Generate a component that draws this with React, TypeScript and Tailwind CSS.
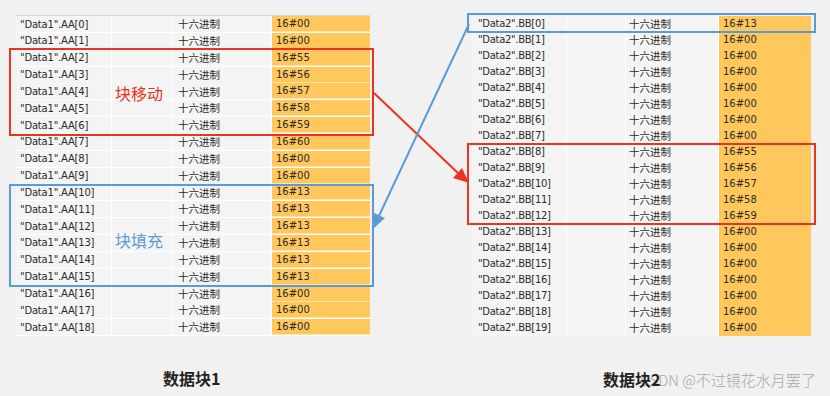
import React from 'react';

/** 一行数据 */
interface Row {
  name: string;
  value: string;
}

const LEFT_ROWS: Row[] = [
  '00', '00', '55', '56', '57', '58', '59', '60', '00', '00',
  '13', '13', '13', '13', '13', '13', '00', '00', '00',
].map((v, i) => ({ name: `"Data1".AA[${i}]`, value: `16#${v}` }));

const RIGHT_ROWS: Row[] = [
  '13', '00', '00', '00', '00', '00', '00', '00', '55', '56',
  '57', '58', '59', '00', '00', '00', '00', '00', '00', '00',
].map((v, i) => ({ name: `"Data2".BB[${i}]`, value: `16#${v}` }));

const latin = { fontFamily: '"DejaVu Sans", "Noto Sans CJK SC", sans-serif' };
const cjk = { fontFamily: '"Noto Sans CJK SC", sans-serif' };

function LeftTable() {
  return (
    <div className="w-[354px] border-t border-[#d9d9d9]">
      {LEFT_ROWS.map((r) => (
        <div
          key={r.name}
          className="grid h-[16.85px] grid-cols-[96px_61px_99px_98px] border-b border-white text-[#2b2b2b]"
        >
          <div className="flex items-center border-r border-white bg-[#f4f4f4] pl-[4px] text-[10px] tracking-[-0.2px]" style={latin}>
            {r.name}
          </div>
          <div className="border-r border-white bg-[#f4f4f4]" />
          <div className="flex items-center border-r border-white bg-[#f4f4f4] pl-[5px] text-[10.5px]" style={cjk}>
            十六进制
          </div>
          <div className="flex items-center border-b border-[#ffe2a6] bg-[#ffc75c] pl-[4px] text-[10px]" style={latin}>
            {r.value}
          </div>
        </div>
      ))}
    </div>
  );
}

function RightTable() {
  return (
    <div className="w-[339px]">
      {RIGHT_ROWS.map((r) => (
        <div
          key={r.name}
          className="grid h-[16px] grid-cols-[95px_59px_93px_92px] border-b border-white text-[#2b2b2b]"
        >
          <div className="flex items-center border-r border-white bg-[#f4f4f4] pl-[6px] text-[10px] tracking-[-0.3px]" style={latin}>
            {r.name}
          </div>
          <div className="border-r border-white bg-[#f4f4f4]" />
          <div className="flex items-center border-r border-white bg-[#f4f4f4] pl-[3px] text-[10.5px]" style={cjk}>
            十六进制
          </div>
          <div className="flex items-center bg-[#ffc75c] pl-[4px] text-[10px]" style={latin}>
            {r.value}
          </div>
        </div>
      ))}
    </div>
  );
}

export default function App() {
  return (
    <div className="relative flex h-[396px] w-[830px] overflow-hidden bg-[#f1f1f1]">
      {/* 数据块1 */}
      <div className="ml-[16px] mt-[15px] flex flex-col">
        <LeftTable />
        <div className="mt-[30px] pl-[147px] text-[16px] font-bold text-[#222]" style={cjk}>
          数据块1
        </div>
      </div>

      {/* 数据块2 */}
      <div className="ml-[102px] mt-[16px] flex flex-col">
        <RightTable />
        <div className="mt-[31px] flex items-baseline pl-[131px]">
          <span className="relative z-10 text-[16px] font-bold text-[#222]" style={cjk}>数据块2</span>
          <span className="-ml-[20px] text-[15px] font-light text-[#a8a8a8]" style={cjk}>
            CSDN @不过镜花水月罢了
          </span>
        </div>
      </div>

      {/* 标注框 */}
      <div className="absolute left-[9px] top-[48px] h-[88px] w-[365px] border-2 border-[#ea3323]" />
      <div className="absolute left-[9px] top-[184px] h-[103px] w-[365px] border-2 border-[#5b9bd5]" />
      <div className="absolute left-[467px] top-[13px] h-[20px] w-[349px] border-2 border-[#5b9bd5]" />
      <div className="absolute left-[467px] top-[143px] h-[82px] w-[349px] border-2 border-[#ea3323]" />

      <div className="absolute left-[115px] top-[81px] text-[16px] text-[#ea3323]" style={cjk}>块移动</div>
      <div className="absolute left-[115px] top-[228px] text-[16px] text-[#5b9bd5]" style={cjk}>块填充</div>

      {/* 箭头 */}
      <svg className="pointer-events-none absolute left-0 top-0" width="830" height="396">
        <line x1="374" y1="93" x2="460" y2="175" stroke="#ea3323" strokeWidth="2" />
        <polygon points="469,183 453,178 462,168" fill="#ea3323" />
        <line x1="469" y1="24" x2="378" y2="218" stroke="#5b9bd5" strokeWidth="2" />
        <polygon points="374,228 372,212 385,218" fill="#5b9bd5" />
      </svg>
    </div>
  );
}
